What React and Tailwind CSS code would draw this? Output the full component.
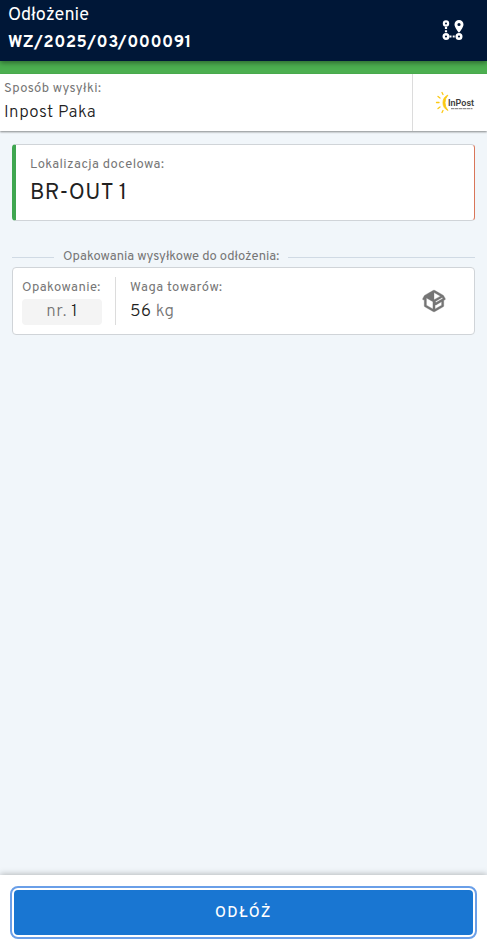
function RouteIcon() {
  return (
    <svg className="h-6 w-6 text-white" viewBox="0 0 24 24" fill="none" stroke="currentColor" aria-hidden="true">
      <circle cx="5" cy="4.5" r="2.1" strokeWidth="2.2" />
      <circle cx="5" cy="17.5" r="2.3" strokeWidth="2.4" />
      <circle cx="18" cy="17.5" r="2.3" strokeWidth="2.4" />
      <path d="M5 8v6.500" strokeWidth="2.2" strokeDasharray="2 1.2" />
      <path d="M8.5 17.5h6.500" strokeWidth="2.2" strokeDasharray="2 1.2" />
      <path
        d="M18 1a4.500 4.500 0 0 0-4.500 4.500c0 3 4.500 8.300 4.500 8.300s4.500-5.300 4.500-8.300A4.500 4.500 0 0 0 18 1zm0 2.900a1.600 1.600 0 1 1 0 3.200 1.600 1.600 0 0 1 0-3.200z"
        fill="currentColor"
        fillRule="evenodd"
        stroke="none"
      />
    </svg>
  );
}

function PackageIcon() {
  return (
    <svg className="h-[26px] w-[26px] text-[#757575]" viewBox="0 0 24 24" fill="currentColor" stroke="currentColor" strokeWidth="0.3" aria-hidden="true">
      <path d="M2,10.96C1.5,10.68 1.35,10.07 1.63,9.59L3.13,7C3.24,6.8 3.41,6.66 3.6,6.58L11.43,2.18C11.59,2.06 11.79,2 12,2C12.21,2 12.41,2.06 12.57,2.18L20.47,6.62C20.66,6.72 20.82,6.88 20.91,7.08L22.36,9.6C22.64,10.08 22.47,10.69 22,10.96L21,11.54V16.5C21,16.88 20.79,17.21 20.47,17.38L12.57,21.82C12.41,21.94 12.21,22 12,22C11.79,22 11.59,21.94 11.43,21.82L3.53,17.38C3.21,17.21 3,16.88 3,16.5V10.96C2.7,11.13 2.32,11.14 2,10.96M12,4.15V4.15L12,10.85V10.85L17.96,7.5L12,4.15M5,15.91L11,19.29V12.58L5,9.21V15.91M19,15.91V12.69L14,15.59C13.67,15.77 13.3,15.76 13,15.6V19.29L19,15.91M13.85,13.36L20.13,9.73L19.55,8.72L13.27,12.35L13.85,13.36Z" />
      <path d="M12 4.150v6.700l-6-3.350z" stroke="none" />
    </svg>
  );
}

function InPostLogo() {
  return (
    <svg className="h-6 w-10 tracking-normal" viewBox="0 0 40 24" role="img" aria-label="InPost">
      <path d="M13 4a8.500 8.500 0 0 0 0 15.500a11.500 11.500 0 0 1 0-15.500z" fill="#fbc913" stroke="#fbc913" strokeWidth="0.8" />
      <g stroke="#fbc913" strokeWidth="1.300" strokeLinecap="round">
        <path d="M7 1.500l1 2" />
        <path d="M3 5.500l2 1.500" />
        <path d="M1.500 11.500h2.500" />
        <path d="M3 17.500l2-1.500" />
        <path d="M7 21.500l1-2" />
      </g>
      <text x="13" y="15" fontSize="9" fontWeight="600" fill="#3c3c3b" fontFamily="Roboto, sans-serif">
        InPost
      </text>
      <path d="M16 17.700h21.500" stroke="#777" strokeWidth="1" strokeDasharray="3 0.500 4 0.500" />
    </svg>
  );
}

function Label({ children }) {
  return <p className="text-[13px] leading-5 text-[#757575]">{children}</p>;
}

function Header({ title, number }) {
  return (
    <header className="relative z-10 flex items-center justify-between bg-[#001737] py-0.5 pr-5 pl-2 text-white shadow-[0_2px_5px_rgba(0,0,0,0.4)]">
      <div>
        <p className="text-lg leading-7 tracking-normal">{title}</p>
        <h1 className="pb-0.5 text-[17px] leading-[27px] font-bold">{number}</h1>
      </div>
      <button type="button" aria-label="Trasa" className="p-0.5">
        <RouteIcon />
      </button>
    </header>
  );
}

function ShippingMethod({ name }) {
  return (
    <section className="flex bg-white shadow-[0_1px_2px_rgba(0,0,0,0.45)]">
      <div className="flex-1 px-1 pt-[5px] pb-1">
        <Label>Sposób wysyłki:</Label>
        <p className="text-[17px] leading-7 font-light text-[#212121]">{name}</p>
      </div>
      <div className="flex w-[75px] items-center justify-end border-l border-[#dcdcdc] pr-3">
        <InPostLogo />
      </div>
    </section>
  );
}

function TargetLocation({ code }) {
  return (
    <section className="rounded-sm border border-l-4 border-[#d0d4d8] border-r-[#d9765a] border-l-[#3fa650] bg-white px-3.5 pt-2.5 pb-2">
      <Label>Lokalizacja docelowa:</Label>
      <p className="pt-px text-[22px] leading-9 text-[#212121]">{code}</p>
    </section>
  );
}

function PackageCard({ number, weight }) {
  return (
    <article className="flex items-center rounded border border-[#d0d4d8] bg-white p-[9px]">
      <div className="w-[94px] border-r border-[#dcdcdc] pt-px pr-[13px]">
        <Label>Opakowanie:</Label>
        <p className="mt-px rounded bg-[#f4f4f4] text-center text-[17px] leading-[26px] font-light text-[#757575]">
          nr. <span className="text-[#212121]">{number}</span>
        </p>
      </div>
      <div className="flex-1 pt-px pl-3.5">
        <Label>Waga towarów:</Label>
        <p className="mt-px text-[17px] leading-[26px] font-light text-[#757575]">
          <span className="text-[#212121]">{weight}</span> kg
        </p>
      </div>
      <button type="button" aria-label="Pokaż opakowanie" className="mr-[18px]">
        <PackageIcon />
      </button>
    </article>
  );
}

export default function App() {
  const packages = [{ number: 1, weight: 56 }];

  return (
    <div className="flex min-h-screen flex-col bg-[#f1f6fa] font-['Overpass','Roboto',sans-serif] tracking-wide">
      <Header title="Odłożenie" number="WZ/2025/03/000091" />
      <div className="h-[13px] bg-[#4caf50]" />
      <ShippingMethod name="Inpost Paka" />

      <main className="flex-1 px-3 pt-[13px]">
        <TargetLocation code="BR-OUT 1" />

        <section className="mt-[26px]">
          <div className="flex items-center">
            <span className="h-px w-[42px] bg-[#d0dae4]" />
            <h2 className="px-[9px] text-[13px] leading-5 tracking-normal text-[#757575]">Opakowania wysyłkowe do odłożenia:</h2>
            <span className="h-px flex-1 bg-[#d0dae4]" />
          </div>
          {packages.map(p => (
            <PackageCard key={p.number} number={p.number} weight={p.weight} />
          ))}
        </section>
      </main>

      <footer className="sticky bottom-0 bg-white px-3.5 pt-[15px] pb-3 shadow-[0_-1px_6px_rgba(0,0,0,0.25)]">
        <button
          type="button"
          className="h-[45px] w-full rounded-sm bg-[#1976d2] pt-1 text-[15px] font-medium tracking-widest text-white uppercase outline-2 outline-offset-2 outline-[#6a9fe8]"
        >
          Odłóż
        </button>
      </footer>
    </div>
  );
}
